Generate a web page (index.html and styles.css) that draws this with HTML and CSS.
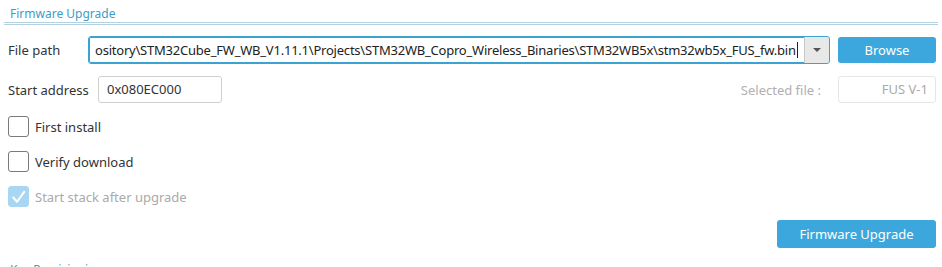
FILE: index.html
```html
<!DOCTYPE html>
<html>
<head>
<meta charset="utf-8">
<link rel="stylesheet" href="styles.css">
</head>
<body>
<div class="panel">
  <div class="title">Firmware Upgrade</div>
  <div class="content">
    <div class="row row-path">
      <div class="label">File path</div>
      <div class="combo">
        <div class="combo-text">ository\STM32Cube_FW_WB_V1.11.1\Projects\STM32WB_Copro_Wireless_Binaries\STM32WB5x\stm32wb5x_FUS_fw.bin<span class="caret"></span></div>
        <div class="combo-btn"><span class="arrow"></span></div>
      </div>
      <div class="btn browse">Browse</div>
    </div>
    <div class="row row-addr">
      <div class="label addr-label">Start address</div>
      <div class="input addr">0x080EC000</div>
      <div class="spacer"></div>
      <div class="sel-label">Selected file :</div>
      <div class="input sel">FUS V-1</div>
    </div>
    <div class="check-row first">
      <span class="box"></span><span class="check-label">First install</span>
    </div>
    <div class="check-row">
      <span class="box"></span><span class="check-label">Verify download</span>
    </div>
    <div class="check-row disabled">
      <span class="box checked"><svg width="20" height="20" viewBox="0 0 20 20"><path d="M4.5 10.5 L8.5 15 L16 4.5" fill="none" stroke="#fff" stroke-width="2.2" stroke-linecap="round" stroke-linejoin="round"/></svg></span><span class="check-label">Start stack after upgrade</span>
    </div>
    <div class="action-row">
      <div class="btn upgrade">Firmware Upgrade</div>
    </div>
  </div>
  <div class="next-title">Key Provisioning</div>
</div>
</body>
</html>
```
FILE: styles.css
```css
html, body {
  margin: 0;
  padding: 0;
  background: #fff;
}
body {
  font-family: "Noto Sans", "Open Sans", sans-serif;
  font-size: 13px;
  color: #333;
  width: 942px;
  height: 267px;
  overflow: hidden;
}
.panel {
  padding: 0 4px;
}
.title {
  font-size: 12px;
  color: #3e9cc6;
  padding: 5px 0 0 6px;
  height: 17px;
  line-height: 17px;
  border-bottom: 3px double #b3d2de;
}
.content {
  padding: 0 2px 0 4px;
}
.row {
  display: flex;
  align-items: center;
}
.row-path {
  margin-top: 11px;
  height: 28px;
}
.label {
  width: 80px;
  flex: none;
  color: #333;
}
.combo {
  flex: 1;
  display: flex;
  height: 28px;
  box-sizing: border-box;
  border: 1px solid #3ba3d1;
  border-radius: 3px;
  box-shadow: inset 0 0 0 1px #3ba3d1;
  overflow: hidden;
}
.combo-text {
  flex: 1;
  padding: 0 0 0 6px;
  line-height: 26px;
  white-space: nowrap;
  overflow: hidden;
  letter-spacing: -0.22px;
  color: #222;
}
.caret {
  display: inline-block;
  width: 1px;
  height: 16px;
  background: #222;
  vertical-align: -3px;
  margin-left: 1px;
}
.combo-btn {
  width: 24px;
  flex: none;
  background: #e8e8e8;
  border-left: 1px solid #c8c8c8;
  display: flex;
  align-items: center;
  justify-content: center;
}
.arrow {
  width: 0;
  height: 0;
  border-left: 4px solid transparent;
  border-right: 4px solid transparent;
  border-top: 4px solid #555;
}
.btn {
  background: #3ca7dc;
  color: #fff;
  border-radius: 3px;
  text-align: center;
  box-sizing: border-box;
}
.browse {
  width: 98px;
  height: 26px;
  line-height: 26px;
  margin-left: 8px;
  flex: none;
}
.row-addr {
  margin-top: 12px;
  height: 27px;
}
.addr-label {
  width: 90px;
}
.input {
  height: 27px;
  box-sizing: border-box;
  border: 1px solid #cfcfcf;
  border-radius: 3px;
  line-height: 25px;
  flex: none;
}
.addr {
  width: 124px;
  padding-left: 8px;
  color: #333;
}
.spacer {
  flex: 1;
}
.sel-label {
  color: #b0b0b0;
  margin-right: 17px;
}
.sel {
  width: 98px;
  border-color: #e6e6e6;
  color: #aaa;
  text-align: right;
  padding-right: 7px;
}
.check-row {
  display: flex;
  align-items: center;
  height: 21px;
  margin-top: 14px;
}
.check-row.first {
  margin-top: 13px;
}
.box {
  width: 21px;
  height: 21px;
  box-sizing: border-box;
  border: 1px solid #7a7a7a;
  border-radius: 3px;
  flex: none;
  margin-right: 6px;
  display: flex;
  align-items: center;
  justify-content: center;
}
.box.checked {
  background: #a9d6f2;
  border-color: #a9d6f2;
}
.check-label {
  color: #333;
}
.disabled .check-label {
  color: #aaa;
}
.action-row {
  display: flex;
  justify-content: flex-end;
  margin-top: 13px;
}
.upgrade {
  width: 159px;
  height: 28px;
  line-height: 28px;
}
.next-title {
  margin-top: 13px;
  padding-left: 6px;
  color: #3e9cc6;
  font-size: 12px;
  line-height: 17px;
}
```
